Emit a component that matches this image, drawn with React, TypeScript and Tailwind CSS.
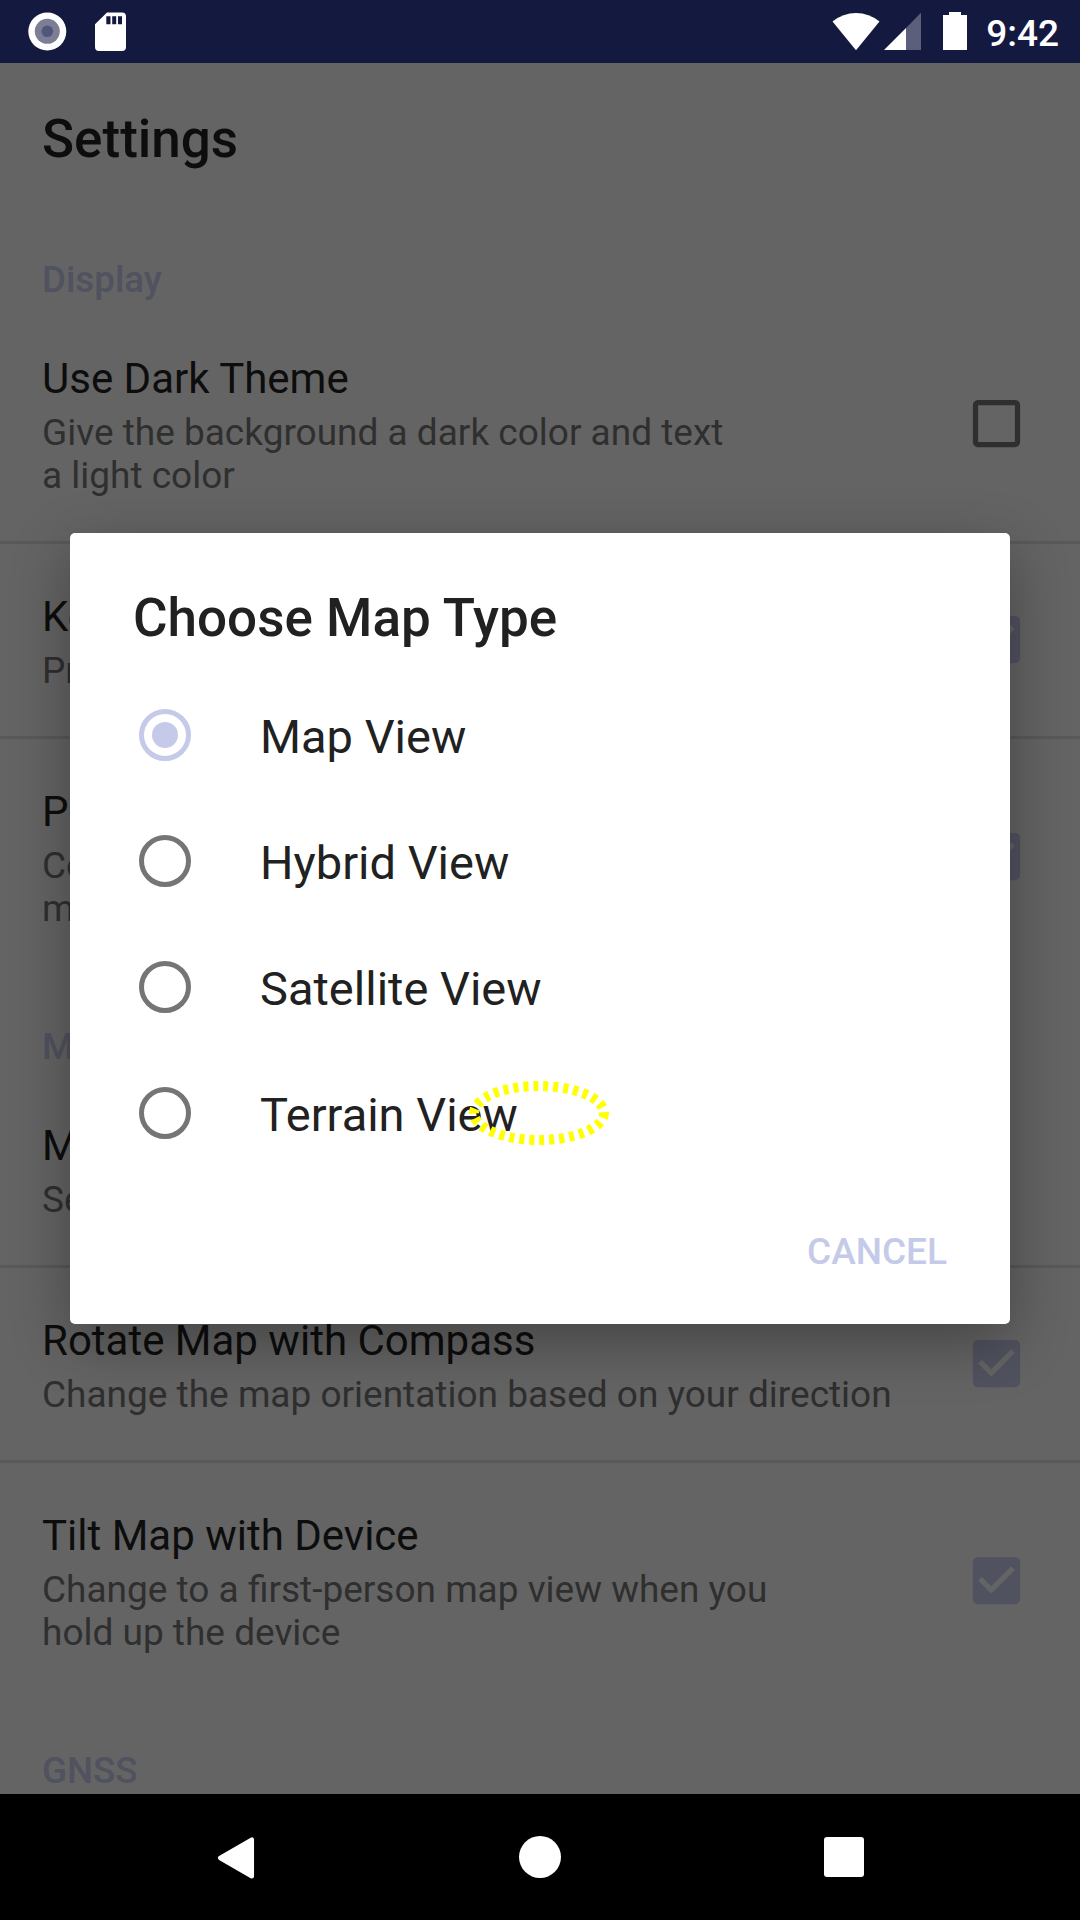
import React from "react";

function Checkbox({ checked }: { checked: boolean }) {
  return (
    <svg viewBox="0 0 24 24" className="mb-px size-[63px] shrink-0">
      {checked ? (
        <path
          fill="#50525f"
          d="M19 3H5c-1.11 0-2 .9-2 2v14c0 1.1.89 2 2 2h14c1.11 0 2-.9 2-2V5c0-1.1-.89-2-2-2zm-9 14l-5-5 1.41-1.41L10 14.17l7.59-7.59L19 8l-9 9z"
        />
      ) : (
        <path
          fill="#2f2f2f"
          d="M19 5v14H5V5h14m0-2H5c-1.1 0-2 .9-2 2v14c0 1.1.9 2 2 2h14c1.1 0 2-.9 2-2V5c0-1.1-.9-2-2-2z"
        />
      )}
    </svg>
  );
}

function Category({ children }: { children: React.ReactNode }) {
  return (
    <h2 className="h-24 shrink-0 px-[42px] pt-[51px] text-[36.75px] leading-[43px] font-medium text-[#50525f]">
      {children}
    </h2>
  );
}

type PreferenceProps = {
  title: string;
  lines: string[];
  checked?: boolean;
  first?: boolean;
};

function Preference({ title, lines, checked, first }: PreferenceProps) {
  return (
    <div
      className={`flex shrink-0 items-center justify-between border-t-[3px] pr-[52.5px] pl-[42px] ${
        first ? "border-transparent" : "border-[#595959]"
      } ${lines.length > 1 ? "h-[238px]" : "h-[195px]"}`}
    >
      <div className="self-start pt-12 whitespace-nowrap">
        <div className="text-[42px] leading-[49px] text-[#0d0d0d]">{title}</div>
        <div className="mt-2 text-[37px] leading-[43px] text-[#2f2f2f]">
          {lines.map((line) => (
            <div key={line}>{line}</div>
          ))}
        </div>
      </div>
      {checked !== undefined && <Checkbox checked={checked} />}
    </div>
  );
}

function StatusBar() {
  return (
    <header className="flex h-[63px] shrink-0 items-center bg-[#141940] text-white">
      <svg viewBox="0 0 140 63" className="h-[63px] w-[140px]">
        <circle cx="47.3" cy="31.5" r="19" fill="#fff" />
        <circle cx="47.3" cy="31.3" r="12.5" fill="#7c7e96" />
        <circle cx="47.3" cy="31.3" r="5.8" fill="#52567a" />
        <path
          fill="#fff"
          fillRule="evenodd"
          d="M107 12.5h15a4 4 0 0 1 4 4V47a4 4 0 0 1-4 4H99a4 4 0 0 1-4-4V24.2zM106.3 16.2v8h4.2v-8zM112.2 16.2v8h4v-8zM118 16.2v8h4v-8z"
        />
      </svg>
      <svg viewBox="0 0 150 63" className="ml-auto h-[63px] w-[150px]">
        <path fill="#fff" d="M2.5 21.5Q13 13 26 13t23.5 8.500L26 50.300z" />
        <path fill="#5c5f7c" d="M91 12.800V50H76V28z" />
        <path fill="#fff" d="M76 28V50H54z" />
        <path fill="#fff" d="M119 12h12v3h6v35h-24V15h6z" />
      </svg>
      <span className="mt-[3px] mr-[21px] ml-[6px] text-[37px] leading-[43px] font-medium">9:42</span>
    </header>
  );
}

function NavigationBar() {
  return (
    <nav className="flex h-[126px] shrink-0 items-center justify-between bg-black px-[205px]">
      <svg viewBox="0 0 63 63" className="size-[63px]">
        <path
          d="M15.200 32L46.800 13.700V50.300z"
          fill="#fff"
          stroke="#fff"
          strokeWidth="4.500"
          strokeLinejoin="round"
        />
      </svg>
      <div className="size-[42px] rounded-full bg-white" />
      <div className="mr-[11px] ml-3 size-10 rounded-[3px] bg-white" />
    </nav>
  );
}

function Radio({ selected }: { selected: boolean }) {
  return (
    <span
      className={`flex size-[52.5px] items-center justify-center rounded-full border-[5px] ${
        selected ? "border-[#c5cae9]" : "border-[#757575]"
      }`}
    >
      {selected && <span className="size-[26px] rounded-full bg-[#c5cae9]" />}
    </span>
  );
}

const mapTypes = ["Map View", "Hybrid View", "Satellite View", "Terrain View"];

function MapTypeDialog() {
  return (
    <div
      role="dialog"
      className="absolute top-[533px] left-[70px] flex h-[791px] w-[940px] flex-col rounded-[5px] bg-white text-[#212121] shadow-[0_18px_60px_rgba(0,0,0,0.32)]"
    >
      <h1 className="pt-[54px] pl-[63px] text-[53px] leading-[62px] font-medium">Choose Map Type</h1>
      <ul className="mt-[23px]">
        {mapTypes.map((name, i) => (
          <li key={name} className="flex h-[126px] items-center pl-[68.5px]">
            <Radio selected={i === 0} />
            <span className="mt-0.5 ml-[69px] text-[47px] leading-[55px]">{name}</span>
          </li>
        ))}
      </ul>
      <button className="mt-[54px] mr-[63px] self-end text-[37px] leading-[43px] font-medium text-[#c5cae9]">
        CANCEL
      </button>
      <svg viewBox="0 0 150 76" className="absolute top-[542px] left-[394px] h-[76px] w-[150px]">
        <ellipse
          cx="75"
          cy="38"
          rx="65"
          ry="27"
          fill="none"
          stroke="#ff0"
          strokeWidth="10"
          strokeDasharray="5 5"
        />
      </svg>
    </div>
  );
}

export default function App() {
  return (
    <div className="relative flex h-[1920px] w-[1080px] flex-col overflow-hidden bg-[#646464] font-['Roboto',sans-serif]">
      <StatusBar />
      <main className="flex h-[1731px] shrink-0 flex-col overflow-hidden">
        <h1 className="h-36 shrink-0 px-[42px] pt-[45px] text-[53px] leading-[62px] font-medium text-[#0d0d0d]">
          Settings
        </h1>
        <Category>Display</Category>
        <Preference
          first
          title="Use Dark Theme"
          lines={["Give the background a dark color and text", "a light color"]}
          checked={false}
        />
        <Preference title="Keep Screen On" lines={["Prevent the screen from turning off"]} checked />
        <Preference
          title="Play Sounds"
          lines={["Continue playing sounds while the", "map is open"]}
          checked
        />
        <Category>Map</Category>
        <Preference first title="Map Type" lines={["Select the map type"]} />
        <Preference
          title="Rotate Map with Compass"
          lines={["Change the map orientation based on your direction"]}
          checked
        />
        <Preference
          title="Tilt Map with Device"
          lines={["Change to a first-person map view when you", "hold up the device"]}
          checked
        />
        <Category>GNSS</Category>
      </main>
      <NavigationBar />
      <MapTypeDialog />
    </div>
  );
}
